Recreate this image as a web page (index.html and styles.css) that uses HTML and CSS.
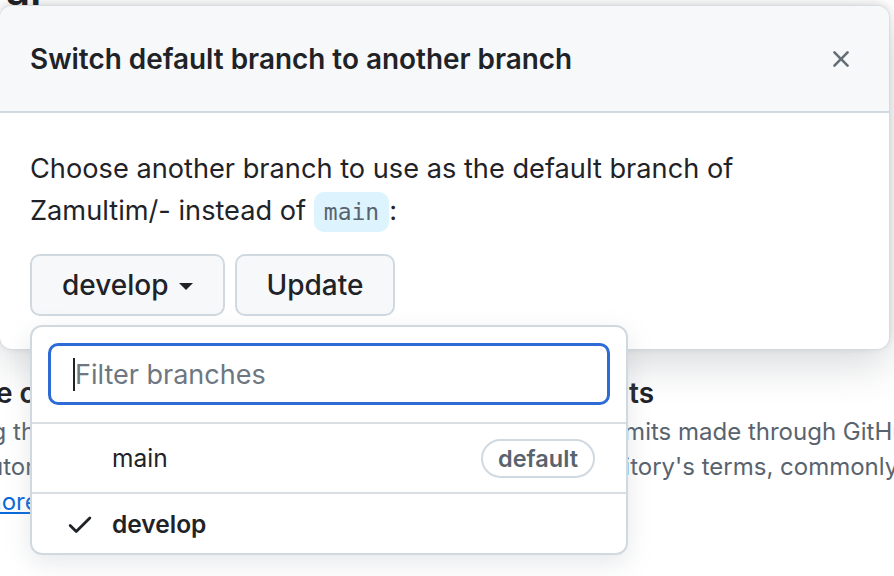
FILE: index.html
```html
<!DOCTYPE html>
<html>
<head>
<meta charset="utf-8">
<link rel="stylesheet" href="styles.css">
</head>
<body>
<div class="page">
  <h1 class="page-title">General</h1>
  <section class="setting">
    <h3 class="setting-title">Require contributors to sign off on web-based commits</h3>
    <p class="setting-desc">Enabling this setting will require contributors to sign off on commits made through GitHub's web interface. Signing off is a way for<br>contributors to affirm that their commit complies with the repository's terms, commonly the Developer Certificate of Origin (DCO).<br><a href="#" class="link">Learn more about signing off on commits</a>.</p>
  </section>
</div>

<div class="dialog">
  <div class="dialog-header">
    <h2 class="dialog-title">Switch default branch to another branch</h2>
    <button class="close-btn" aria-label="Close">
      <svg viewBox="0 0 16 16" width="28" height="28"><path fill="currentColor" d="M3.72 3.72a.75.75 0 0 1 1.06 0L8 6.94l3.220-3.22a.749.749 0 0 1 1.275.326.749.749 0 0 1-.215.734L9.06 8l3.22 3.22a.749.749 0 0 1-.326 1.275.749.749 0 0 1-.734-.215L8 9.06l-3.22 3.22a.751.751 0 0 1-1.042-.018.751.751 0 0 1-.018-1.042L6.94 8 3.72 4.78a.75.75 0 0 1 0-1.06Z"/></svg>
    </button>
  </div>
  <div class="dialog-body">
    <p class="dialog-text">Choose another branch to use as the default branch of Zamultim/- instead of <code class="code">main</code>:</p>
    <div class="actions">
      <div class="menu-wrap">
        <button class="btn">develop <span class="caret"></span></button>
        <div class="dropdown">
          <div class="filter">
            <div class="input"><span class="cursor"></span><span class="placeholder">Filter branches</span></div>
          </div>
          <div class="item">
            <span class="check-cell"></span>
            <span class="item-name">main</span>
            <span class="badge">default</span>
          </div>
          <div class="item item-selected">
            <span class="check-cell">
              <svg viewBox="0 0 16 16" width="30" height="30"><path fill="currentColor" d="M13.780 4.22a.75.75 0 0 1 0 1.06l-7.25 7.25a.75.75 0 0 1-1.06 0L2.22 9.28a.751.751 0 0 1 .018-1.042.751.751 0 0 1 1.042-.018L6 10.94l6.72-6.72a.75.75 0 0 1 1.06 0Z"/></svg>
            </span>
            <span class="item-name">develop</span>
          </div>
        </div>
      </div>
      <button class="btn">Update</button>
    </div>
  </div>
</div>
</body>
</html>
```
FILE: styles.css
```css
html, body {
  margin: 0;
  padding: 0;
  background: #ffffff;
  overflow: hidden;
  width: 894px;
  height: 576px;
}
body {
  font-family: Inter, "Liberation Sans", sans-serif;
  color: #1f2328;
}
.page {
  margin-left: -91px;
  width: 1100px;
  white-space: nowrap;
}
.page-title {
  margin: -33px 0 0 -26px;
  font-size: 42px;
  line-height: 46px;
  font-weight: 600;
}
.setting {
  padding-top: 359px;
}
.setting-title {
  margin: 0;
  font-size: 28px;
  line-height: 42px;
  font-weight: 600;
}
.setting-desc {
  margin: 0;
  font-size: 24px;
  line-height: 35px;
  color: #59636e;
}
.link {
  color: #0969da;
  text-decoration: underline;
}

/* dialog */
.dialog {
  position: absolute;
  left: 0;
  top: 6px;
  width: 889px;
  background: #ffffff;
  border-radius: 12px;
  box-shadow: 0 0 0 1px rgba(208,215,222,.5), 0 -2px 10px rgba(0,0,0,.14), 0 16px 40px rgba(66,74,83,.2);
}
.dialog-header {
  height: 105px;
  background: #f6f8fa;
  border-bottom: 2px solid #d1d9e0;
  border-radius: 12px 12px 0 0;
  display: flex;
  align-items: center;
  justify-content: space-between;
  padding: 0 34px 0 30px;
}
.dialog-title {
  margin: 0;
  font-size: 27.9px;
  font-weight: 600;
  color: #1f2328;
}
.close-btn {
  border: 0;
  background: transparent;
  padding: 0;
  color: #656d76;
  display: flex;
}
.dialog-body {
  padding: 35px 30px 33px;
}
.dialog-text {
  margin: 0;
  font-size: 27.2px;
  line-height: 42px;
  color: #1f2328;
  width: 740px;
}
.code {
  font-family: "DejaVu Sans Mono", "Liberation Mono", monospace;
  font-size: 23px;
  color: #59636e;
  background: #ddf4ff;
  border-radius: 10px;
  padding: 7px 10px;
}
.actions {
  margin-top: 21px;
  display: flex;
  gap: 10px;
}
.menu-wrap {
  position: relative;
}
.btn {
  height: 62px;
  padding: 0 30px;
  font-family: Inter, "Liberation Sans", sans-serif;
  font-size: 28px;
  font-weight: 500;
  color: #1f2328;
  background: #f6f8fa;
  border: 2px solid #d1d9e0;
  border-radius: 10px;
  display: flex;
  align-items: center;
  gap: 10px;
}
.caret {
  width: 0;
  height: 0;
  border-left: 7px solid transparent;
  border-right: 7px solid transparent;
  border-top: 7px solid #1f2328;
  margin-top: 2px;
}

/* dropdown */
.dropdown {
  position: absolute;
  left: 0;
  top: 71px;
  width: 594px;
  background: #ffffff;
  border: 2px solid #d1d9e0;
  border-radius: 12px;
  box-shadow: 0 8px 24px rgba(140,149,159,.22);
}
.filter {
  padding: 16px 16px 17px;
  border-bottom: 2px solid #d8dee4;
}
.input {
  height: 56px;
  border: 3px solid #2f6bd6;
  border-radius: 10px;
  display: flex;
  align-items: center;
  padding-left: 22px;
}
.cursor {
  width: 2px;
  height: 33px;
  background: #1f2328;
}
.placeholder {
  font-size: 27px;
  color: #6e7781;
}
.item {
  height: 68px;
  display: flex;
  align-items: center;
  padding: 0 31px 0 33px;
  font-size: 24.5px;
  color: #1f2328;
}
.item + .item {
  border-top: 2px solid #d8dee4;
  height: 59px;
}
.check-cell {
  width: 47px;
  display: flex;
  align-items: center;
  color: #1f2328;
}
.item-name {
  flex: 1;
}
.item-selected .item-name {
  font-weight: 600;
}
.badge {
  height: 35px;
  padding: 0 15px;
  border: 2px solid #d1d9e0;
  border-radius: 20px;
  font-size: 23.5px;
  font-weight: 600;
  color: #59636e;
  display: flex;
  align-items: center;
}
```
